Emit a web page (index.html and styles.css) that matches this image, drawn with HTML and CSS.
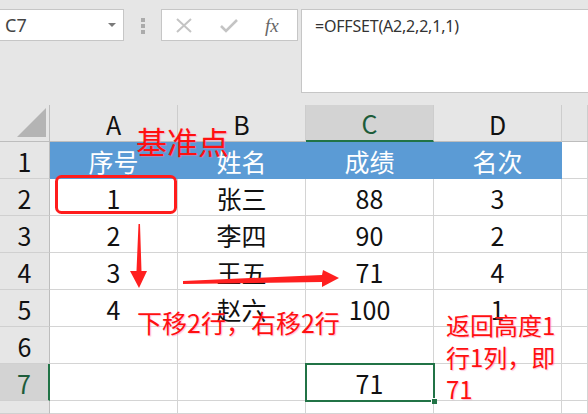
FILE: index.html
```html
<!DOCTYPE html>
<html lang="zh">
<head>
<meta charset="utf-8">
<link rel="stylesheet" href="styles.css">
</head>
<body>
<div class="app">
  <div class="toolbar">
    <div class="namebox">
      <span class="name">C7</span>
      <span class="caret"></span>
    </div>
    <div class="grip"><i></i><i></i><i></i></div>
    <div class="fbtns">
      <svg class="ico" width="16" height="15" viewBox="0 0 16 15"><path d="M1 1 L15 14 M15 1 L1 14" stroke="#c4c4c4" stroke-width="2" fill="none"/></svg>
      <svg class="ico" width="18" height="15" viewBox="0 0 18 15"><path d="M1 8 L6 13 L17 2" stroke="#c4c4c4" stroke-width="2.6" fill="none"/></svg>
      <span class="fx">fx</span>
    </div>
    <div class="formula">=OFFSET(A2,2,2,1,1)</div>
  </div>

  <div class="sheet">
    <div class="grid">
      <div class="corner"><span class="tri"></span></div>
      <div class="ch">A</div>
      <div class="ch">B</div>
      <div class="ch selcol">C</div>
      <div class="ch">D</div>
      <div class="ch"></div>

      <div class="rh">1</div>
      <div class="c hd">序号</div>
      <div class="c hd">姓名</div>
      <div class="c hd">成绩</div>
      <div class="c hd">名次</div>
      <div class="c"></div>

      <div class="rh">2</div>
      <div class="c">1</div>
      <div class="c">张三</div>
      <div class="c">88</div>
      <div class="c">3</div>
      <div class="c"></div>

      <div class="rh">3</div>
      <div class="c">2</div>
      <div class="c">李四</div>
      <div class="c">90</div>
      <div class="c">2</div>
      <div class="c"></div>

      <div class="rh">4</div>
      <div class="c">3</div>
      <div class="c">王五</div>
      <div class="c">71</div>
      <div class="c">4</div>
      <div class="c"></div>

      <div class="rh">5</div>
      <div class="c">4</div>
      <div class="c">赵六</div>
      <div class="c">100</div>
      <div class="c">1</div>
      <div class="c"></div>

      <div class="rh">6</div>
      <div class="c"></div>
      <div class="c"></div>
      <div class="c"></div>
      <div class="c"></div>
      <div class="c"></div>

      <div class="rh selrow">7</div>
      <div class="c"></div>
      <div class="c"></div>
      <div class="c active">71</div>
      <div class="c"></div>
      <div class="c"></div>

      <div class="rh last">8</div>
      <div class="c last"></div>
      <div class="c last"></div>
      <div class="c last"></div>
      <div class="c last"></div>
      <div class="c last"></div>
    </div>

    <svg class="marks" width="588" height="309" viewBox="0 0 588 309">
      <rect x="56.5" y="71.5" width="119" height="36" rx="5" ry="5" fill="none" stroke="#ff1c1c" stroke-width="3"/>
      <polygon points="138.5,119 140,119 141.5,166 147,166 139,183 130,166 136.5,166" fill="#ff2020"/>
      <polygon points="183,176 322,170 323,165 339,173 322,182 322,177 183,179" fill="#ff2020"/>
    </svg>
    <div class="note note-base">基准点</div>
    <div class="note note-move">下移2行，右移2行</div>
    <div class="note note-ret">返回高度1<br>行1列，即<br>71</div>
  </div>
</div>
</body>
</html>
```

FILE: styles.css
```css
html, body {
  margin: 0;
  padding: 0;
}
body {
  width: 588px;
  height: 414px;
  overflow: hidden;
  background: #e6e6e6;
  font-family: "Noto Sans CJK SC", "Noto Sans", sans-serif;
}
.app {
  display: flex;
  flex-direction: column;
  height: 414px;
  overflow: hidden;
}

/* ---------- toolbar ---------- */
.toolbar {
  height: 105px;
  flex: none;
  box-sizing: border-box;
  padding-top: 9px;
  display: flex;
  align-items: flex-start;
}
.namebox {
  width: 124px;
  height: 32px;
  box-sizing: border-box;
  background: #fff;
  border: 1px solid #c6c6c6;
  border-left: none;
  display: flex;
  align-items: center;
  justify-content: space-between;
  padding: 0 7px 0 5px;
}
.name {
  font-family: "Noto Sans", sans-serif;
  font-size: 18px;
  color: #444;
  line-height: 1;
}
.caret {
  width: 0;
  height: 0;
  border-left: 4px solid transparent;
  border-right: 4px solid transparent;
  border-top: 4px solid #7a7a7a;
}
.grip {
  width: 37px;
  display: flex;
  flex-direction: column;
  align-items: center;
  gap: 2px;
  padding-top: 9px;
}
.grip i {
  display: block;
  width: 4px;
  height: 4px;
  background: #ababab;
}
.fbtns {
  width: 137px;
  height: 32px;
  box-sizing: border-box;
  background: #fff;
  border: 1px solid #c6c6c6;
  margin-right: 3px;
  display: flex;
  align-items: center;
  gap: 28px;
  padding-left: 14px;
}
.fx {
  font-family: "Liberation Serif", serif;
  font-style: italic;
  font-size: 19px;
  color: #666;
  line-height: 1;
  margin-left: -1px;
}
.formula {
  flex: 1;
  height: 84px;
  box-sizing: border-box;
  background: #fff;
  border: 1px solid #c6c6c6;
  border-right: none;
  padding: 5px 0 0 13px;
  font-family: "Noto Sans", sans-serif;
  font-size: 16px;
  line-height: 22px;
  color: #333;
  letter-spacing: -0.2px;
}

/* ---------- sheet ---------- */
.sheet {
  position: relative;
  flex: 1;
  overflow: hidden;
}
.grid {
  display: grid;
  grid-template-columns: 50px 128px 128px 128px 128px 26px;
  grid-template-rows: repeat(8, 37px) 13px;
  font-size: 25px;
  color: #111;
}
.grid > div {
  box-sizing: border-box;
  display: flex;
  align-items: center;
  justify-content: center;
  padding-top: 2px;
  line-height: 1;
}
.grid > .last {
  align-items: flex-start;
  overflow: hidden;
  padding-top: 8px;
}
.corner {
  background: #e6e6e6;
  border-right: 1px solid #bdbdbd;
  border-bottom: 1px solid #bdbdbd;
  position: relative;
}
.tri {
  position: absolute;
  right: 3px;
  bottom: 4px;
  width: 0;
  height: 0;
  border-left: 29px solid transparent;
  border-bottom: 29px solid #b4b4b4;
}
.ch {
  background: #e6e6e6;
  border-right: 1px solid #cdcdcd;
  border-bottom: 1px solid #bdbdbd;
}
.ch.selcol {
  background: #d3d3d3;
  border-bottom: 2px solid #217346;
  color: #1d5c3a;
}
.rh {
  background: #e6e6e6;
  border-right: 1px solid #bdbdbd;
  border-bottom: 1px solid #d0d0d0;
}
.rh.selrow {
  background: #d3d3d3;
  border-right: 2px solid #217346;
  color: #1d5c3a;
}
.c {
  background: #fff;
  border-right: 1px solid #d4d4d4;
  border-bottom: 1px solid #d4d4d4;
}
.c.hd {
  background: #5b9bd5;
  border-color: transparent;
  color: #fff;
}
.c.active {
  position: relative;
  outline: 2px solid #217346;
  outline-offset: -1px;
}
.c.active::after {
  content: "";
  position: absolute;
  right: -4px;
  bottom: -4px;
  width: 5px;
  height: 5px;
  background: #217346;
  border: 1px solid #fff;
  border-right: none;
  border-bottom: none;
}

/* ---------- annotations ---------- */
.marks {
  position: absolute;
  left: 0;
  top: 0;
  pointer-events: none;
}
.note {
  position: absolute;
  color: #ff1010;
  white-space: nowrap;
  text-shadow: 1px 1px 1px rgba(255, 120, 170, 0.45);
}
.note-base {
  left: 136px;
  top: 20px;
  font-size: 31px;
  line-height: 1;
}
.note-move {
  left: 137px;
  top: 205px;
  font-size: 25px;
  line-height: 1;
}
.note-ret {
  left: 446px;
  top: 204px;
  font-size: 24px;
  line-height: 32px;
}
```
